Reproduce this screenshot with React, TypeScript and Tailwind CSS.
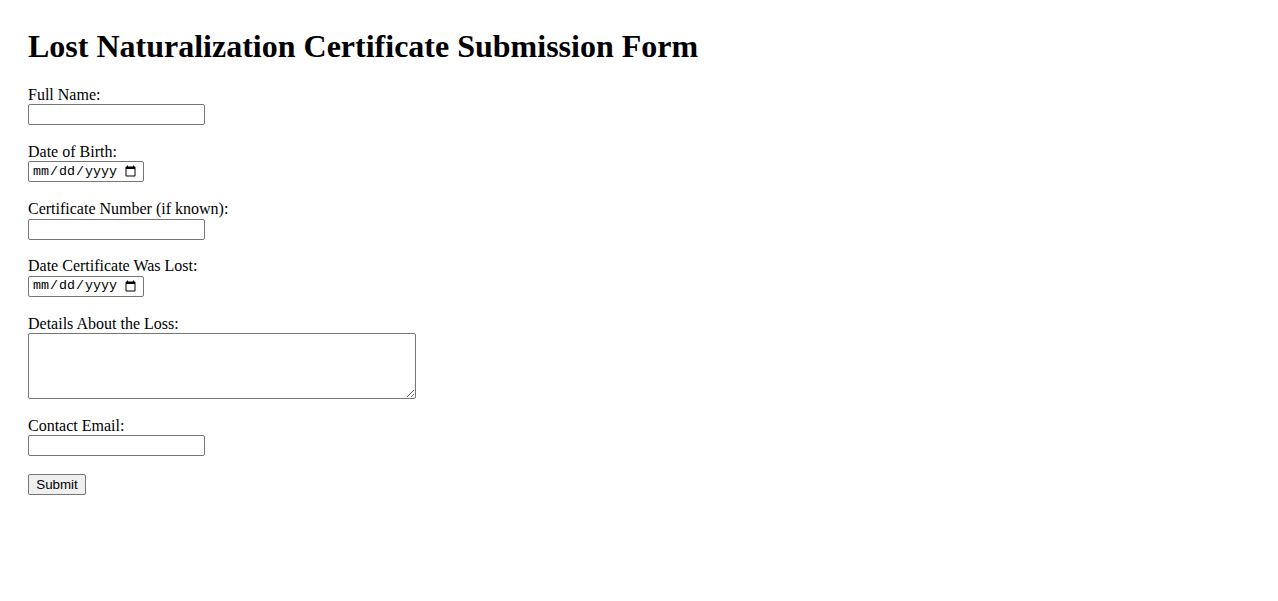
import React from "react";

interface FieldProps {
  label: string;
  children: React.ReactNode;
}

function Field({ label, children }: FieldProps) {
  return (
    <div className="mb-[17.85px]">
      <label className="block text-[16px] leading-[18.4px] text-black">
        {label}
      </label>
      {children}
    </div>
  );
}

const inputClass =
  "block h-[21px] w-[177px] rounded-[2px] border border-[#767676] bg-white px-[2px] text-[13.33px] outline-none";

const dateClass =
  "block h-[21px] w-[116px] rounded-[2px] border border-[#767676] bg-white pl-[3px] pr-[4px] font-['Liberation_Mono',monospace] text-[13.33px] text-black outline-none";

export default function App() {
  return (
    <div className="min-h-screen bg-white px-[28px] pt-[28px] font-['Liberation_Serif','Times_New_Roman',serif] text-black">

      {/* Title */}

      <h1 className="mb-[20.8px] text-[32px] font-bold leading-[36.8px]">
        Lost Naturalization Certificate Submission Form
      </h1>

      {/* Form */}

      <form onSubmit={(e) => e.preventDefault()}>

        <Field label="Full Name:">
          <input type="text" className={inputClass} />
        </Field>

        <Field label="Date of Birth:">
          <input type="date" className={dateClass} />
        </Field>

        <Field label="Certificate Number (if known):">
          <input type="text" className={inputClass} />
        </Field>

        <Field label="Date Certificate Was Lost:">
          <input type="date" className={dateClass} />
        </Field>

        <Field label="Details About the Loss:">
          <textarea className="block h-[66px] w-[388px] resize rounded-[2px] border border-[#767676] bg-white p-[2px] font-['Liberation_Mono',monospace] text-[13.33px] outline-none" />
        </Field>

        <Field label="Contact Email:">
          <input type="email" className={inputClass} />
        </Field>

        <button
          type="submit"
          className="block h-[21px] w-[58px] rounded-[2px] border border-[#767676] bg-[#efefef] font-['Liberation_Sans',Arial,sans-serif] text-[13.33px] leading-[15px] text-black"
        >
          Submit
        </button>

      </form>

    </div>
  );
}
